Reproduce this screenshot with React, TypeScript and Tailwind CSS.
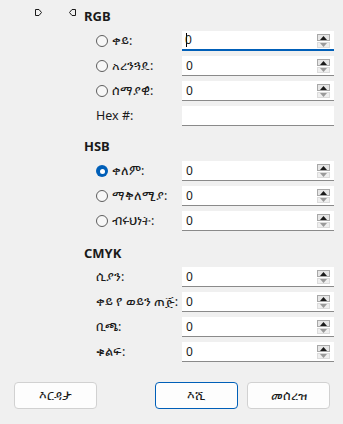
import React from 'react'

const font = { fontFamily: '"Noto Sans", "DejaVu Sans", "Liberation Sans", sans-serif' }

function Radio({ checked }: { checked?: boolean }) {
  if (checked) {
    return (
      <span className="w-[12px] h-[12px] rounded-full bg-[#005fb8] flex items-center justify-center shrink-0">
        <span className="w-[5px] h-[5px] rounded-full bg-white" />
      </span>
    )
  }
  return <span className="w-[12px] h-[12px] rounded-full border border-[#5d5d5d] bg-[#f7f7f7] shrink-0" />
}

function Spinner() {
  return (
    <div className="absolute right-[4px] top-[3px] flex flex-col gap-px w-[13px]">
      <div className="h-[7px] border border-[#a8a8a8] bg-[#e6e6e6] flex items-center justify-center">
        <svg width="7" height="4" viewBox="0 0 7 4"><path d="M0 4 L3.5 0 L7 4 Z" fill="#1a1a1a" /></svg>
      </div>
      <div className="h-[6px] border border-[#dcdcdc] bg-[#efefef] flex items-center justify-center">
        <svg width="7" height="4" viewBox="0 0 7 4"><path d="M0 0 L3.5 4 L7 0 Z" fill="#9a9a9a" /></svg>
      </div>
    </div>
  )
}

function Field({ value = '0', spin = true, focus = false }: { value?: string; spin?: boolean; focus?: boolean }) {
  return (
    <div
      className={`relative h-[20px] w-[152px] bg-white flex items-center pl-[4px] text-[12px] text-[#1a1a1a] ${
        focus ? 'border-b-2 border-[#005fb8]' : 'border-b border-[#8a8a8a]'
      }`}
    >
      {focus && <span className="w-px h-[14px] bg-black -mr-[2px]" />}
      <span>{value}</span>
      {spin && <Spinner />}
    </div>
  )
}

function Row({ label, radio, checked, field }: { label: string; radio?: boolean; checked?: boolean; field: React.ReactNode }) {
  return (
    <div className="flex items-center h-[20px] pl-[12px]">
      <div className="w-[86px] flex items-center gap-[4px] text-[12.5px] text-[#1a1a1a] whitespace-nowrap">
        {radio && <Radio checked={checked} />}
        <span>{label}</span>
      </div>
      {field}
    </div>
  )
}

function Header({ text }: { text: string }) {
  return <div className="h-[14px] flex items-center text-[13px] font-bold text-[#1a1a1a]">{text}</div>
}

function Btn({ children, primary }: { children: React.ReactNode; primary?: boolean }) {
  return (
    <button
      className={`w-[83px] h-[27px] rounded-[4px] bg-[#fdfdfd] text-[13px] text-[#1a1a1a] flex items-center justify-center ${
        primary ? 'border border-[#005fb8]' : 'border border-[#d1d1d1]'
      }`}
    >
      {children}
    </button>
  )
}

export default function App() {
  return (
    <div className="w-[343px] h-[424px] bg-[#f0f0f0]" style={font}>
      <div className="flex">
        <div className="w-[84px] shrink-0">
          <svg width="84" height="24" viewBox="0 0 84 24">
            <path d="M35.5 9.5 H39 L41.5 12.5 L39 15.5 H35.5 Z" fill="none" stroke="#1a1a1a" strokeWidth="1" />
            <path d="M75.5 9.5 H72 L69.5 12.5 L72 15.5 H75.5 Z" fill="none" stroke="#1a1a1a" strokeWidth="1" />
          </svg>
        </div>
        <div className="flex-1 flex flex-col pt-[10px] pr-[9px]">
          <Header text="RGB" />
          <div className="flex flex-col gap-[5px] mt-[7px]">
            <Row radio label="ቀይ:" field={<Field focus />} />
            <Row radio label="አረንጓዴ:" field={<Field />} />
            <Row radio label="ሰማያዊ:" field={<Field />} />
            <Row label="Hex #:" field={<Field value="" spin={false} />} />
          </div>

          <div className="mt-[14px]">
            <Header text="HSB" />
          </div>
          <div className="flex flex-col gap-[5px] mt-[7px]">
            <Row radio checked label="ቀለም:" field={<Field />} />
            <Row radio label="ማቅለሚያ:" field={<Field />} />
            <Row radio label="ብሩህነት:" field={<Field />} />
          </div>

          <div className="mt-[16px]">
            <Header text="CMYK" />
          </div>
          <div className="flex flex-col gap-[5px] mt-[6px]">
            <Row label="ሲያን:" field={<Field />} />
            <Row label="ቀይ የ ወይን ጠጅ:" field={<Field />} />
            <Row label="ቢጫ:" field={<Field />} />
            <Row label="ቁልፍ:" field={<Field />} />
          </div>
        </div>
      </div>

      <div className="flex mt-[20px] pl-[14px]">
        <Btn>እርዳታ</Btn>
        <div className="ml-[58px] flex gap-[9px]">
          <Btn primary>እሺ</Btn>
          <Btn>መሰረዝ</Btn>
        </div>
      </div>
    </div>
  )
}
